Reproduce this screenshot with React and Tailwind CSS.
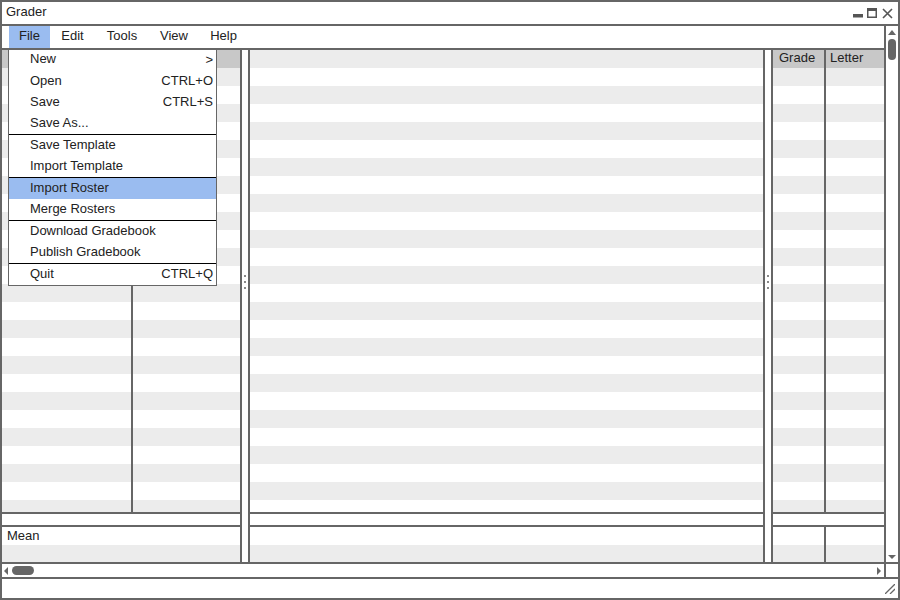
import React from "react";

const rows = Array.from({ length: 26 });

const menuItems = [
  { label: "New", right: ">" },
  { label: "Open", right: "CTRL+O" },
  { label: "Save", right: "CTRL+S" },
  { label: "Save As..." },
  { sep: true },
  { label: "Save Template" },
  { label: "Import Template" },
  { sep: true },
  { label: "Import Roster", active: true },
  { label: "Merge Rosters" },
  { sep: true },
  { label: "Download Gradebook" },
  { label: "Publish Gradebook" },
  { sep: true },
  { label: "Quit", right: "CTRL+Q" },
];

const topMenu = [
  { label: "File", w: "w-[41px]", active: true },
  { label: "Edit", w: "w-[45px]" },
  { label: "Tools", w: "w-[54px]" },
  { label: "View", w: "w-[50px]" },
  { label: "Help", w: "w-[49px]" },
];

const Splitter = () => (
  <div className="w-[6px] flex flex-col items-center pt-[225px] gap-[4px] bg-white">
    <div className="w-[2px] h-[2px] bg-[#888]" />
    <div className="w-[2px] h-[2px] bg-[#888]" />
    <div className="w-[2px] h-[2px] bg-[#888]" />
  </div>
);

const Spacer = () => <div className="h-[15px] shrink-0 border-y-2 border-[#666]" />;

const LeftPanel = () => (
  <div className="w-[240px] border-r-2 border-[#666] flex flex-col">
    <div className="flex-1 min-h-0 overflow-hidden">
      <div className="flex h-[18px] bg-[#c8c8c8]">
        <div className="w-[131px] border-r-2 border-[#666]" />
        <div className="flex-1" />
      </div>
      {rows.map((_, i) => (
        <div key={i} className={i % 2 === 0 ? "flex h-[18px] bg-[#ececec]" : "flex h-[18px] bg-white"}>
          <div className="w-[131px] border-r-2 border-[#666]" />
          <div className="flex-1" />
        </div>
      ))}
    </div>
    <Spacer />
    <div className="h-[35px] shrink-0 flex flex-col">
      <div className="h-[18px] flex items-center pl-[5px] pb-[1px]">Mean</div>
      <div className="h-[17px] bg-[#ececec]" />
    </div>
  </div>
);

const MiddlePanel = () => (
  <div className="flex-1 border-x-2 border-[#666] flex flex-col">
    <div className="flex-1 min-h-0 overflow-hidden">
      {rows.map((_, i) => (
        <div key={i} className={i % 2 === 0 ? "h-[18px] bg-[#ececec]" : "h-[18px] bg-white"} />
      ))}
    </div>
    <Spacer />
    <div className="h-[35px] shrink-0 flex flex-col">
      <div className="h-[18px]" />
      <div className="h-[17px] bg-[#ececec]" />
    </div>
  </div>
);

const RightPanel = () => (
  <div className="w-[113px] border-l-2 border-[#666] flex flex-col">
    <div className="flex-1 min-h-0 overflow-hidden">
      <div className="flex h-[18px] bg-[#c8c8c8] items-center">
        <div className="w-[53px] h-full border-r-2 border-[#666] pl-[6px] pb-[2px] flex items-center">Grade</div>
        <div className="flex-1 h-full pl-[4px] pb-[2px] flex items-center">Letter</div>
      </div>
      {rows.map((_, i) => (
        <div key={i} className={i % 2 === 0 ? "flex h-[18px] bg-[#ececec]" : "flex h-[18px] bg-white"}>
          <div className="w-[53px] border-r-2 border-[#666]" />
          <div className="flex-1" />
        </div>
      ))}
    </div>
    <Spacer />
    <div className="h-[35px] shrink-0 flex flex-col">
      <div className="h-[18px] flex">
        <div className="w-[53px] border-r-2 border-[#666]" />
      </div>
      <div className="h-[17px] flex bg-[#ececec]">
        <div className="w-[53px] border-r-2 border-[#666]" />
      </div>
    </div>
  </div>
);

const FileMenu = () => (
  <div className="absolute left-[6px] top-[47px] w-[209px] bg-white border border-[#666] flex flex-col z-10">
    {menuItems.map((item, i) =>
      item.sep ? (
        <div key={i} className="h-px bg-black" />
      ) : (
        <div
          key={i}
          className={
            item.active
              ? "h-[21px] flex items-center justify-between pl-[21px] pr-[3px] pb-[2px] bg-[#9abcf0]"
              : "h-[21px] flex items-center justify-between pl-[21px] pr-[3px] pb-[2px]"
          }
        >
          <span className={i === 0 ? "-mt-[2px]" : ""}>{item.label}</span>
          {item.right && <span>{item.right}</span>}
        </div>
      )
    )}
  </div>
);

export default function App() {
  return (
    <div className="relative w-[900px] h-[600px] border-2 border-[#666] bg-white flex flex-col overflow-hidden text-[13px] text-[#222] font-['Liberation_Sans',Arial,sans-serif]">
      {/* title bar */}
      <div className="h-[24px] shrink-0 border-b-2 border-[#666] flex items-center pl-[4px] pb-[2px]">
        <span>Grader</span>
        <svg className="ml-auto mr-[4px] mt-[2px]" width="42" height="14" viewBox="0 0 42 14">
          <rect x="1" y="8" width="10" height="3.5" fill="#555" />
          <rect x="15.75" y="2.75" width="8.5" height="8.5" fill="none" stroke="#555" strokeWidth="1.5" />
          <rect x="15" y="2" width="10" height="3" fill="#555" />
          <path d="M31 3 L40 12 M40 3 L31 12" stroke="#555" strokeWidth="1.6" />
        </svg>
      </div>

      {/* main */}
      <div className="flex-1 min-h-0 flex border-b-2 border-[#666]">
        <div className="flex-1 flex flex-col min-w-0">
          <div className="h-[24px] shrink-0 border-b-2 border-[#666] flex pl-[7px]">
            {topMenu.map((m) => (
              <div
                key={m.label}
                className={
                  m.active
                    ? `${m.w} h-full flex items-center justify-center pb-[2px] bg-[#9abcf0]`
                    : `${m.w} h-full flex items-center justify-center pb-[2px]`
                }
              >
                {m.label}
              </div>
            ))}
          </div>
          <div className="flex-1 min-h-0 flex">
            <LeftPanel />
            <Splitter />
            <MiddlePanel />
            <Splitter />
            <RightPanel />
          </div>
        </div>
        {/* vertical scrollbar */}
        <div className="w-[14px] border-l-2 border-[#666] flex flex-col items-center pt-[4px] pb-[3px]">
          <svg width="8" height="5" viewBox="0 0 8 5">
            <path d="M0 5 L4 0 L8 5 Z" fill="#666" />
          </svg>
          <div className="mt-[4px] w-[8px] h-[21px] rounded-full bg-[#666]" />
          <div className="flex-1" />
          <svg width="8" height="4" viewBox="0 0 8 4">
            <path d="M0 0 L8 0 L4 4 Z" fill="#666" />
          </svg>
        </div>
      </div>

      {/* horizontal scrollbar */}
      <div className="h-[15px] shrink-0 border-b-2 border-[#666] flex">
        <div className="flex-1 flex items-center pl-[2px] pr-[3px]">
          <svg width="4" height="8" viewBox="0 0 4 8">
            <path d="M4 0 L0 4 L4 8 Z" fill="#666" />
          </svg>
          <div className="ml-[4px] w-[22px] h-[9px] rounded-full bg-[#666]" />
          <div className="flex-1" />
          <svg width="4" height="8" viewBox="0 0 4 8">
            <path d="M0 0 L4 4 L0 8 Z" fill="#666" />
          </svg>
        </div>
        <div className="w-[14px] border-l-2 border-[#666]" />
      </div>

      {/* status bar */}
      <div className="h-[19px] shrink-0 flex items-end justify-end pr-[3px] pb-[4px]">
        <svg width="10" height="10" viewBox="0 0 10 10">
          <path d="M0 10 L10 0 M5 10 L10 5" stroke="#666" strokeWidth="1.3" />
        </svg>
      </div>

      <FileMenu />
    </div>
  );
}
